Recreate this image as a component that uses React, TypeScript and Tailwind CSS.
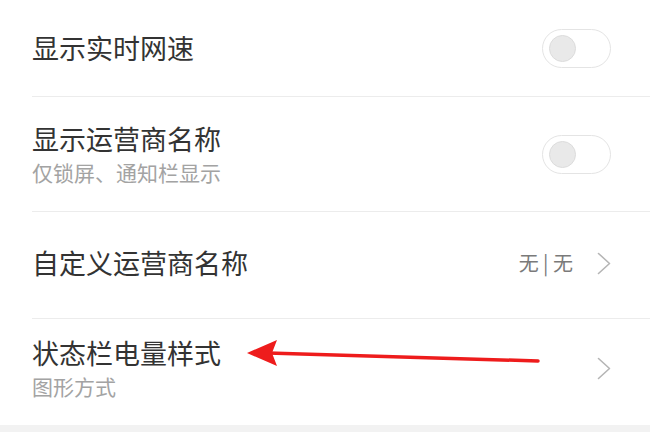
import React from "react";

const font = { fontFamily: '"Noto Sans CJK SC", "Noto Sans", sans-serif' };

function Toggle() {
  return (
    <div className="w-[69px] h-[39px] rounded-full border border-[#e4e4e4] bg-white flex items-center pl-[6px] shrink-0">
      <div className="w-[27px] h-[27px] rounded-full bg-[#e9e9e9] border border-[#dcdcdc]" />
    </div>
  );
}

function Chevron() {
  return (
    <svg width="14" height="23" viewBox="0 0 14 23" className="shrink-0">
      <polyline points="1.5,1.5 12.5,11.5 1.5,21.5" fill="none" stroke="#b5b5b5" strokeWidth="1.6" strokeLinecap="round" strokeLinejoin="round" />
    </svg>
  );
}

function Divider() {
  return <div className="ml-[32px] h-px bg-[#ececec]" />;
}

export default function App() {
  return (
    <div className="relative w-[650px] h-[432px] bg-white overflow-hidden" style={font}>
      <div className="flex flex-col">
        <div className="h-[96px] flex items-center justify-between pl-[32px] pr-[39px]">
          <span className="text-[27px] leading-[32px] text-[#333333]">显示实时网速</span>
          <Toggle />
        </div>
        <Divider />
        <div className="h-[114px] flex items-center justify-between pl-[32px] pr-[39px]">
          <div className="flex flex-col">
            <span className="text-[27px] leading-[32px] text-[#333333]">显示运营商名称</span>
            <span className="mt-[4px] text-[21px] leading-[26px] text-[#a3a3a3]">仅锁屏、通知栏显示</span>
          </div>
          <Toggle />
        </div>
        <Divider />
        <div className="h-[106px] flex items-center justify-between pl-[32px] pr-[39px] pb-[4px]">
          <span className="text-[27px] leading-[32px] text-[#333333]">自定义运营商名称</span>
          <div className="flex items-center gap-[24px]">
            <span className="text-[20px] leading-[26px] text-[#7a7a7a]">无 | 无</span>
            <Chevron />
          </div>
        </div>
        <Divider />
        <div className="h-[106px] flex items-center justify-between pl-[32px] pr-[39px] pb-[8px]">
          <div className="flex flex-col">
            <span className="text-[27px] leading-[32px] text-[#333333]">状态栏电量样式</span>
            <span className="mt-[4px] text-[21px] leading-[26px] text-[#a3a3a3]">图形方式</span>
          </div>
          <Chevron />
        </div>
        <div className="h-[7px] bg-[#f2f2f2]" />
      </div>
      <svg className="absolute left-0 top-0 pointer-events-none" width="650" height="432" viewBox="0 0 650 432">
        <line x1="268" y1="353" x2="538" y2="361" stroke="#ee1c1c" strokeWidth="3.5" strokeLinecap="round" />
        <polygon points="247,353 277,340 272,353 277,366" fill="#ee1c1c" />
      </svg>
    </div>
  );
}
